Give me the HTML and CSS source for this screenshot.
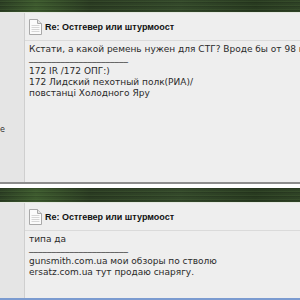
FILE: index.html
```html
<!DOCTYPE html>
<html lang="ru">
<head>
  <meta charset="UTF-8" />
  <title>Остгевер или штурмоост</title>
  <link rel="stylesheet" href="styles.css">
</head>
<body>

  <div class="post first">
    <div class="band"></div>
    <div class="row">
      <div class="side"><span class="side-note">e</span></div>
      <div class="main">
        <div class="head">
          <svg class="doc" width="13" height="16" viewBox="0 0 13 16">
            <path d="M0.5 0.5h8l4 4v11h-12z" fill="#fbfbfb" stroke="#a9a9a9"/>
            <path d="M8.5 0.5v4h4" fill="#e2e2e2" stroke="#a9a9a9"/>
            <path d="M2.5 6.5h8M2.5 8.5h8M2.5 10.5h8M2.5 12.5h8" stroke="#d6d6d6"/>
          </svg>
          <b class="title">Re: Остгевер или штурмоост</b>
        </div>
        <div class="msg tall">
          <div>Кстати, а какой ремень нужен для СТГ? Вроде бы от 98 к</div>
          <div class="sig">______________________</div>
          <div>172 IR /172 ОПГ:)</div>
          <div>172 Лидский пехотный полк(РИА)/</div>
          <div>повстанці Холодного Яру</div>
        </div>
      </div>
    </div>
    <div class="foot"></div>
  </div>

  <div class="post">
    <div class="band"></div>
    <div class="row">
      <div class="side"></div>
      <div class="main">
        <div class="head">
          <svg class="doc" width="13" height="16" viewBox="0 0 13 16">
            <path d="M0.5 0.5h8l4 4v11h-12z" fill="#fbfbfb" stroke="#a9a9a9"/>
            <path d="M8.5 0.5v4h4" fill="#e2e2e2" stroke="#a9a9a9"/>
            <path d="M2.5 6.5h8M2.5 8.5h8M2.5 10.5h8M2.5 12.5h8" stroke="#d6d6d6"/>
          </svg>
          <b class="title">Re: Остгевер или штурмоост</b>
        </div>
        <div class="msg short">
          <div>типа да</div>
          <div class="sig">______________________</div>
          <div>gunsmith.com.ua мои обзоры по стволю</div>
          <div>ersatz.com.ua тут продаю снарягу.</div>
        </div>
      </div>
    </div>
  </div>

  <div class="next"></div>

</body>
</html>
```

FILE: styles.css
```css
body {
  margin: 0;
  background: #eeeeee;
  font-family: 'DejaVu Sans', Verdana, sans-serif;
  color: #2a2a2a;
  overflow: hidden;
}
.post.first {
  margin-top: -2px;
}
.band {
  height: 14px;
  background:
    repeating-linear-gradient(to bottom, rgba(0,0,0,0.12) 0 1px, transparent 1px 3px, rgba(120,160,90,0.10) 3px 4px),
    linear-gradient(to right, #2c3f24, #3d5a2e 12%, #2a3b22 30%, #33482a 60%, #283a20 85%, #2f4326);
  border-bottom: 1px solid #e4e7e0;
}
.row {
  display: flex;
}
.side {
  width: 24px;
  flex: none;
  background: #e5e5e5;
  border-right: 1px solid #cfcfcf;
  font-size: 8px;
  color: #333;
  overflow: hidden;
  white-space: nowrap;
}
.side-note {
  display: block;
  margin-top: 112px;
}
.main {
  flex: 1;
  min-width: 0;
}
.head {
  height: 27px;
  display: flex;
  align-items: center;
  gap: 3px;
  padding-left: 4px;
  border-bottom: 1px solid #dadada;
}
.doc {
  flex: none;
}
.title {
  font-family: 'Liberation Sans', Arial, sans-serif;
  font-size: 9px;
  font-weight: bold;
  color: #111;
  white-space: nowrap;
}
.msg {
  padding: 3px 0 0 4px;
  font-size: 9px;
  line-height: 11px;
  white-space: nowrap;
  overflow: hidden;
}
.sig {
  line-height: 7px;
  padding-bottom: 4px;
}
.msg.tall {
  height: 138px;
}
.msg.short {
  height: 64px;
}
.foot {
  height: 4px;
  background: #ffffff;
  border-top: 2px solid #8c8c8c;
}
.next {
  height: 4px;
  background: #7b9bd0;
}
```
